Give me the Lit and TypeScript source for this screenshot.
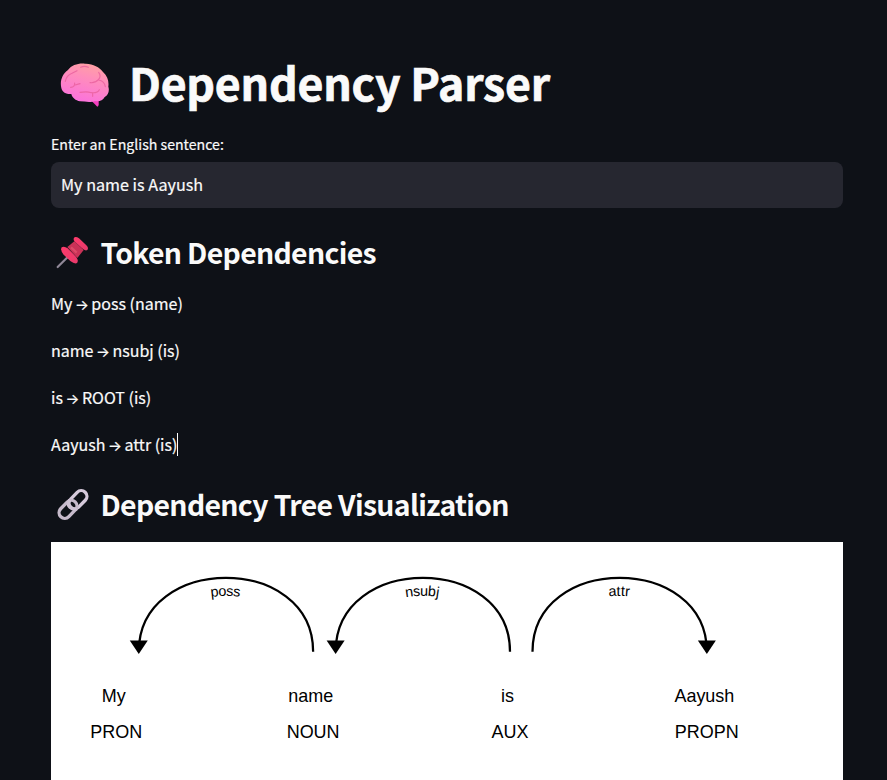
import { LitElement, html, svg, css } from "lit";
import { customElement } from "lit/decorators.js";

interface Dependency { token: string; relation: string; head: string; tag: string; }
interface Arc { from: number; to: number; label: string; }

const TOKENS: Dependency[] = [
  { token: "My", relation: "poss", head: "name", tag: "PRON" },
  { token: "name", relation: "nsubj", head: "is", tag: "NOUN" },
  { token: "is", relation: "ROOT", head: "is", tag: "AUX" },
  { token: "Aayush", relation: "attr", head: "is", tag: "PROPN" },
];

const ARCS: Arc[] = [
  { from: 1, to: 0, label: "poss" },
  { from: 2, to: 1, label: "nsubj" },
  { from: 2, to: 3, label: "attr" },
];

@customElement("dependency-tree")
class DependencyTree extends LitElement {
  static styles = css`
    :host { display: block; background: #fff; padding: 9px; overflow: hidden; box-sizing: border-box; }
    .tree { display: block; width: 843.75px; height: 253px; font-family: "Liberation Sans", Arial, sans-serif; color: #000; }
    .word { font-size: 16px; text-anchor: middle; fill: #000; }
    .label { font-size: 12.8px; text-anchor: middle; fill: #000; letter-spacing: 0.8px; }
    .arc { fill: none; stroke: #000; stroke-width: 2px; }
  `;

  private arc(a: Arc, i: number) {
    const leftward = a.to < a.from;
    const left = 70 + 175 * Math.min(a.from, a.to);
    const right = left + 155;
    const tip = leftward ? left : right;
    return svg`
      <path class="arc" id="arc-${i}" d="M${left},89.5 C${left},2 ${right},2 ${right},89.5"></path>
      <text class="label" dy="1.25em"><textPath href="#arc-${i}" startOffset="50%">${a.label}</textPath></text>
      <path d="M${tip},91.5 L${tip - 8},79.5 ${tip + 8},79.5"></path>`;
  }

  render() {
    return html`<svg class="tree" viewBox="0 0 750 224.9">
      ${TOKENS.map((t, i) => svg`
        <text class="word" x=${47.8 + 175 * i} y="134.5">${t.token}</text>
        <text class="word" x=${50 + 175 * i} y="166.5">${t.tag}</text>`)}
      ${ARCS.map((a, i) => this.arc(a, i))}
    </svg>`;
  }
}

@customElement("app-root")
class AppRoot extends LitElement {
  static styles = css`
    :host {
      display: block; height: 780px; overflow: hidden; box-sizing: border-box;
      padding: 53px 44px 0 51px; background: #0e1117; color: #fafafa;
      font-family: "Noto Sans CJK SC", "Noto Sans", sans-serif;
    }
    .title, .heading { display: flex; align-items: center; margin: 0; font-weight: 700; white-space: nowrap; }
    .title { height: 60px; font-size: 44.6px; line-height: 58px; letter-spacing: -0.2px; -webkit-text-stroke: 0.7px #fafafa; }
    .title-text { height: 60px; }
    .brain { width: 50px; height: 44px; margin: 3px 19px 0 9px; }
    .label { height: 24px; margin-top: 19px; font-size: 14.15px; line-height: 24px; }
    .label, .field, .row { -webkit-text-stroke: 0.2px #fafafa; }
    .field { height: 46px; margin-top: 6px; padding: 0 10px; border-radius: 8px; background: #262730; font-size: 16.15px; line-height: 44px; box-sizing: border-box; }
    .heading { height: 40px; font-size: 28.4px; line-height: 40px; letter-spacing: -0.67px; }
    .tokens-heading { margin-top: 24px; }
    .tree-heading { margin-top: 26px; }
    .glyph { width: 34px; height: 34px; margin: 1px 10.5px 0 5px; }
    .rows { display: flex; flex-direction: column; gap: 20px; margin-top: 18px; }
    .row { display: flex; align-items: center; height: 27px; font-size: 16px; line-height: 27px; white-space: pre; }
    .arrow { display: flex; justify-content: center; width: 11px; margin: 1px 4px 0; font-family: Inter, sans-serif; font-size: 14.5px; }
    .caret { width: 1px; height: 23px; background: #fff; }
    dependency-tree { height: 250px; margin-top: 18px; }
  `;

  private brain() {
    return html`<svg class="brain" viewBox="46 37 150 132">
      <defs>
        <linearGradient id="brain-fill" x1=".8" y1="0" x2=".45" y2="1">
          <stop offset="0" stop-color="#ffa3a0"></stop><stop offset=".4" stop-color="#ff8dbb"></stop><stop offset="1" stop-color="#fb72dc"></stop>
        </linearGradient>
      </defs>
      <path fill="#f63fc0" d="M138 148 L158 168 Q162 168 162 161 V146Z"></path>
      <path fill="url(#brain-fill)" d="M50 112 C45 91 53 70 70 58 C81 43 101 37 121 39 C144 38 164 49 175 64 C189 77 193 91 191 108 C195 120 191 133 180 139 C174 150 164 153 151 151 C139 156 121 153 106 152 C93 149 83 142 80 130 C66 131 53 126 50 112Z"></path>
      <g fill="none" stroke="#e95f9c" stroke-opacity=".8" stroke-width="3.4" stroke-linecap="round" stroke-linejoin="round">
        <path d="M62 92 Q65 75 82 68 L97 60"></path><path d="M108 50 Q119 44 131 50"></path>
        <path d="M162 65 Q171 77 161 87 Q151 98 136 96 M162 88 Q179 91 182 108"></path>
        <path d="M78 110 Q91 109 90 97 M91 103 L106 99"></path>
        <path d="M106 125 Q128 122 140 126 Q159 128 164 117 M144 128 V137"></path>
      </g>
    </svg>`;
  }

  private pin() {
    return html`<svg class="glyph" viewBox="33 34 102 102">
      <defs><linearGradient id="pin-fill" x1="0" y1="0" x2="1" y2="1"><stop offset="0" stop-color="#ff3b6c"></stop><stop offset="1" stop-color="#e83a6b"></stop></linearGradient></defs>
      <path d="M38 127 L72 93" stroke="#8f8797" stroke-width="6.5" stroke-linecap="round"></path>
      <path fill="#c93257" d="M67 67 L88 50 L116 76 L97 100Z"></path>
      <path d="M78 68 L95 84" stroke="#dc4a68" stroke-width="7"></path>
      <path fill="url(#pin-fill)" d="M50 68 Q57 63 68 71 L93 96 Q102 108 96 115 Q89 119 76 109 L56 90 Q45 76 50 68Z"></path>
      <path fill="url(#pin-fill)" d="M87 39 Q92 34 102 41 L124 62 Q132 70 127 76 Q121 80 111 71 L93 54 Q83 46 87 39Z"></path>
    </svg>`;
  }

  private link() {
    return html`<svg class="glyph" viewBox="12 9 102 102">
      <g fill="none" stroke-width="10">
        <rect x="-31" y="-17" width="62" height="34" rx="17" stroke="#d6cadb" transform="translate(78 44) rotate(-46)"></rect>
        <rect x="-31" y="-17" width="62" height="34" rx="17" stroke="#c6bacb" transform="translate(48 73) rotate(-46)"></rect>
        <path d="M54 44 Q44 57 53 66 Q62 76 75 72" stroke="#cec2d3"></path>
      </g>
    </svg>`;
  }

  render() {
    return html`
      <h1 class="title">${this.brain()}<span class="title-text">Dependency Parser</span></h1>
      <div class="label">Enter an English sentence:</div>
      <div class="field">My name is Aayush</div>
      <h2 class="heading tokens-heading">${this.pin()}<span>Token Dependencies</span></h2>
      <div class="rows">
        ${TOKENS.map((t, i) => html`<div class="row"><span>${t.token}</span><span class="arrow">→</span><span>${t.relation} (${t.head})</span>${i === TOKENS.length - 1 ? html`<span class="caret"></span>` : ""}</div>`)}
      </div>
      <h2 class="heading tree-heading">${this.link()}<span>Dependency Tree Visualization</span></h2>
      <dependency-tree></dependency-tree>
    `;
  }
}
